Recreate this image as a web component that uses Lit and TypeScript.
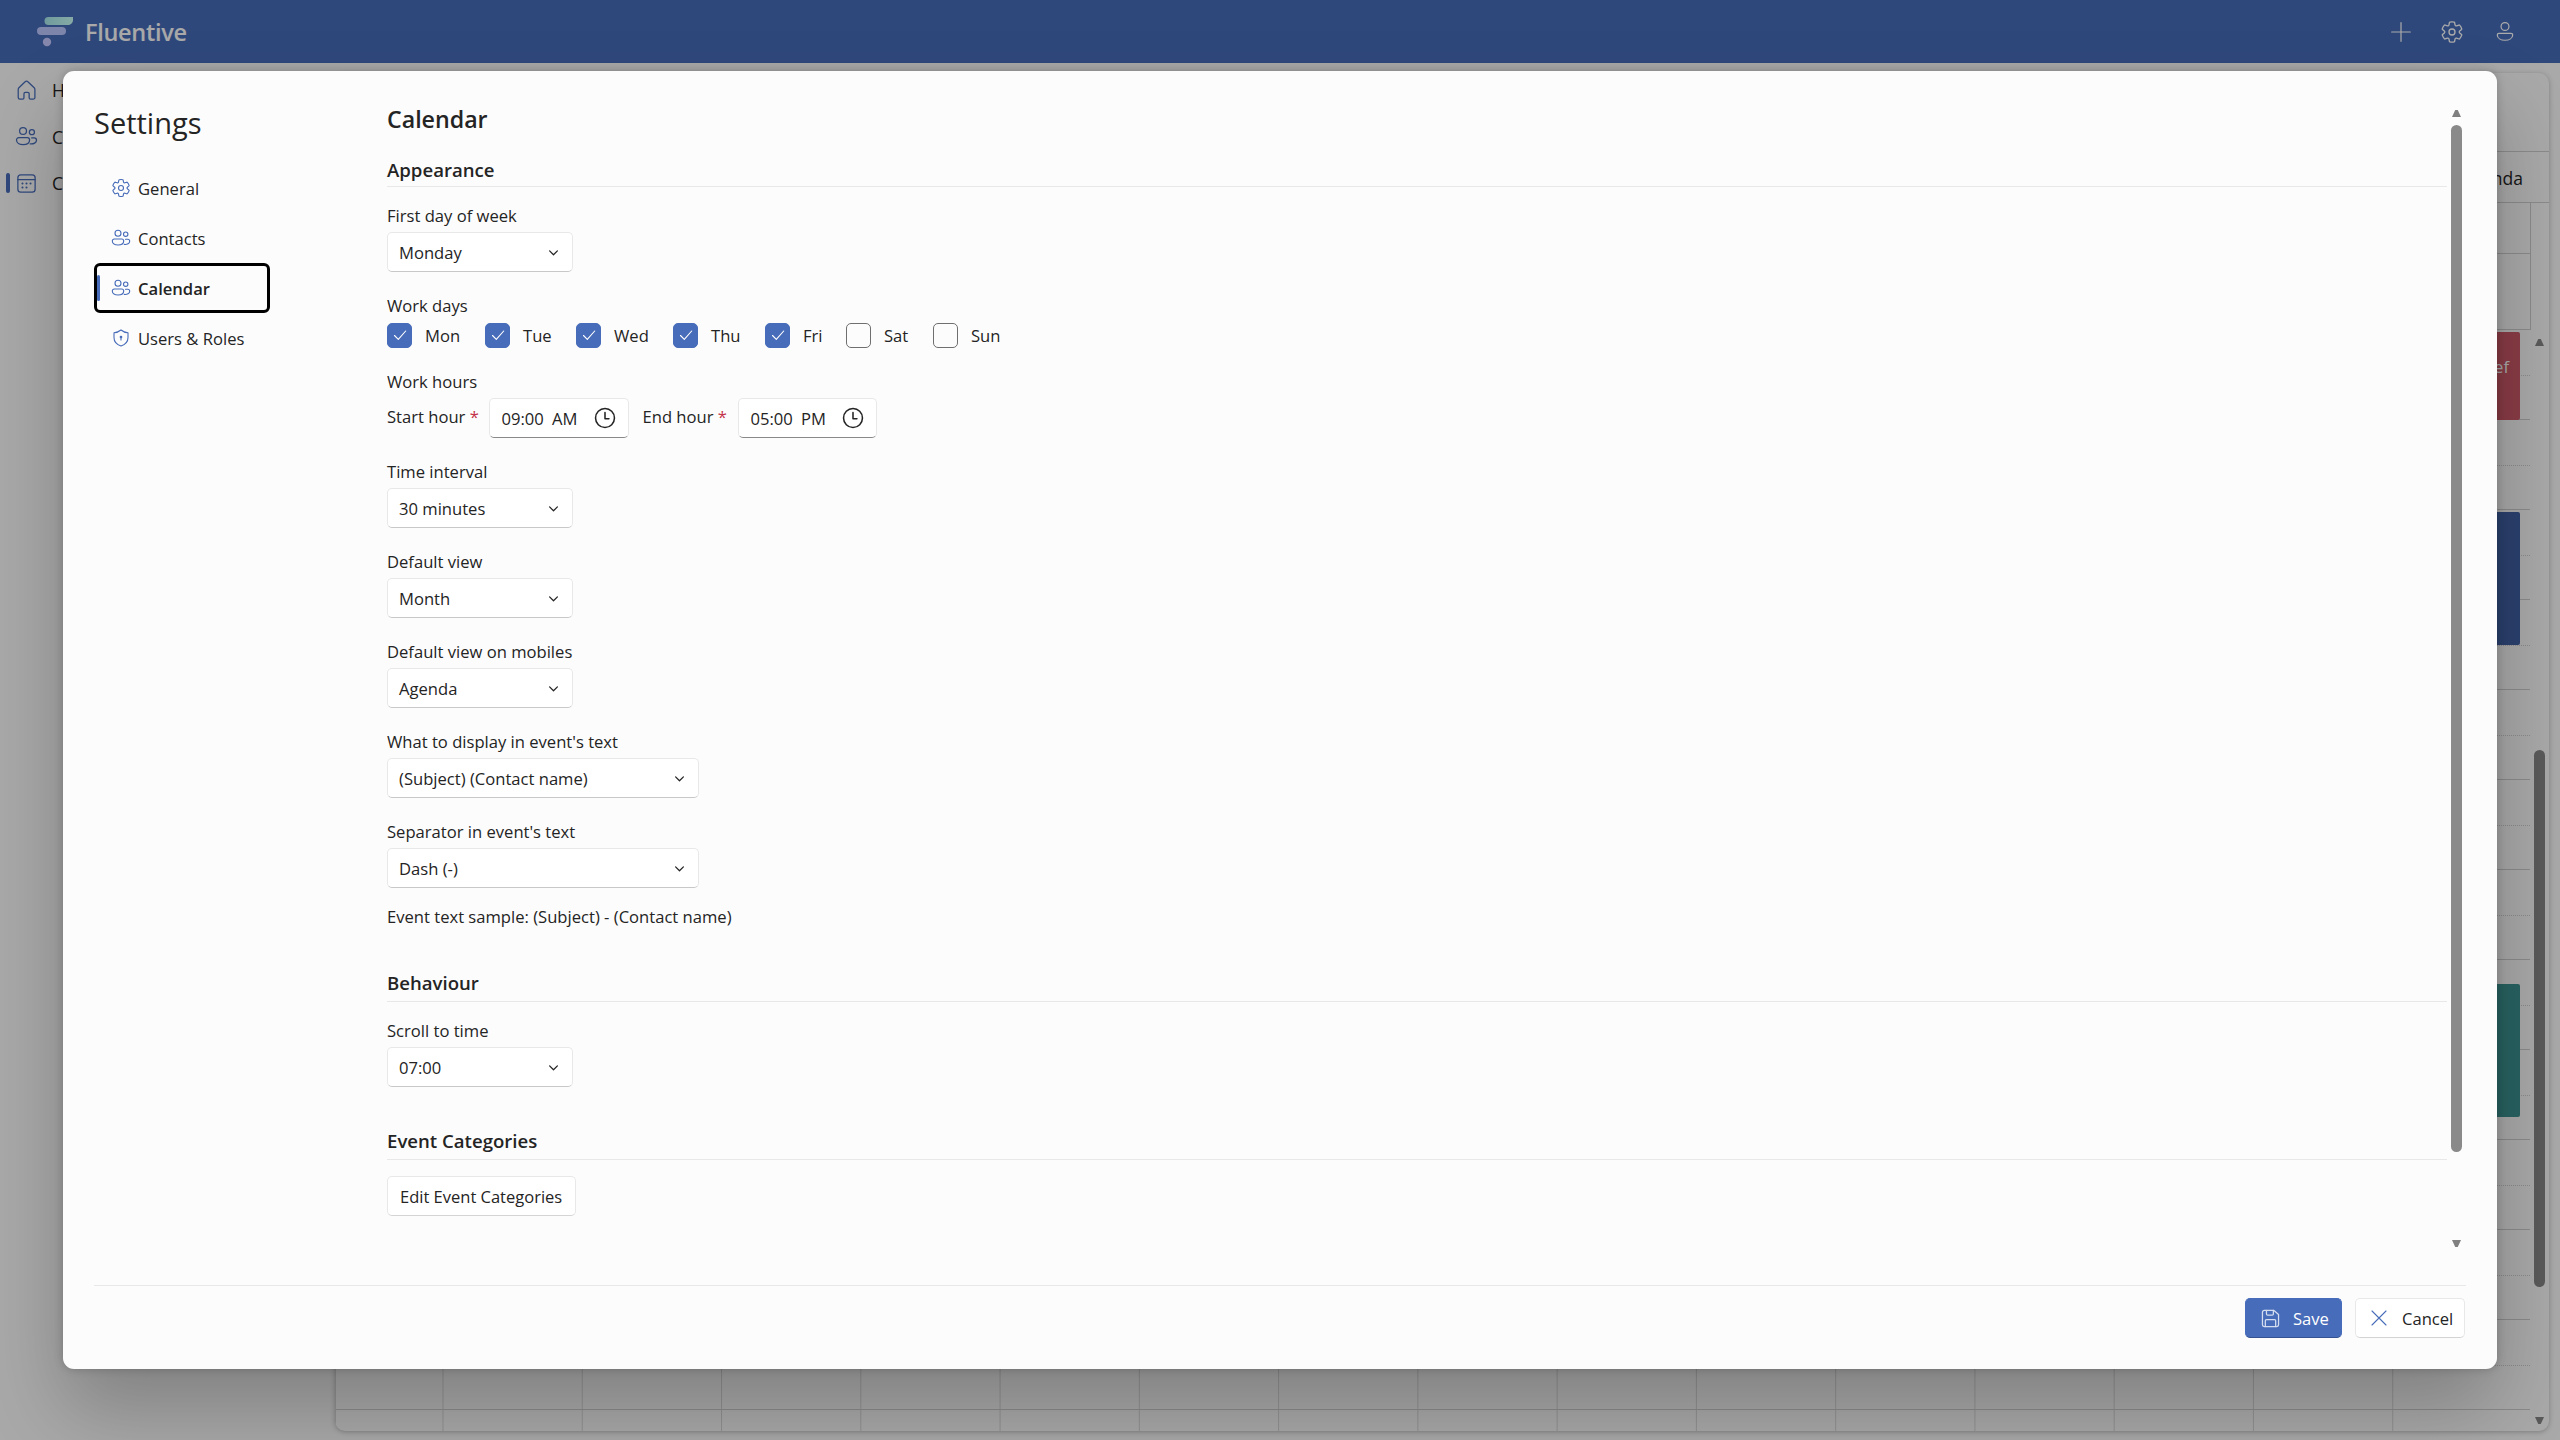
import { LitElement, html, css, svg } from "lit";
import { customElement } from "lit/decorators.js";

const ic = (body: unknown, size = 20, cls = "") =>
  html`<svg class="ic ${cls}" width=${size} height=${size} viewBox="0 0 20 20" fill="none" stroke="currentColor" stroke-width="1.1" stroke-linecap="round" stroke-linejoin="round">${body}</svg>`;

const gear = svg`<path d="M1.91 7.38A8.5 8.5 0 0 1 3.7 4.3a.5.5 0 0 1 .54-.13l1.92.68a1 1 0 0 0 1.32-.76l.36-2a.5.5 0 0 1 .4-.4 8.53 8.53 0 0 1 3.55 0c.2.04.35.2.38.4l.37 2a1 1 0 0 0 1.32.76l1.92-.68a.5.5 0 0 1 .54.13 8.5 8.5 0 0 1 1.78 3.08c.06.2 0 .4-.15.54l-1.56 1.32a1 1 0 0 0 0 1.52l1.56 1.32a.5.5 0 0 1 .15.54 8.5 8.5 0 0 1-1.78 3.08.5.5 0 0 1-.54.13l-1.92-.68a1 1 0 0 0-1.32.76l-.37 2a.5.5 0 0 1-.38.4 8.53 8.53 0 0 1-3.56 0 .5.5 0 0 1-.39-.4l-.36-2a1 1 0 0 0-1.32-.76l-1.92.68a.5.5 0 0 1-.54-.13 8.5 8.5 0 0 1-1.78-3.08.5.5 0 0 1 .15-.54l1.56-1.32a1 1 0 0 0 0-1.52L2.06 7.92a.5.5 0 0 1-.15-.54Z"/><circle cx="10" cy="10" r="2.5"/>`;
const people = svg`<circle cx="7" cy="5.2" r="3"/><circle cx="14.7" cy="6.2" r="2.2"/><path d="M3.3 11h7.4a2 2 0 0 1 2 2c0 2.6-2.6 4-5.7 4s-5.7-1.4-5.7-4a2 2 0 0 1 2-2Z"/><path d="M13.2 16.4c3 .3 5.5-1 5.5-3.2a2 2 0 0 0-2-2h-2.2"/>`;
const home = svg`<path d="M8.6 2.6a2 2 0 0 1 2.8 0l5.3 5a2 2 0 0 1 .6 1.5V16a1.5 1.5 0 0 1-1.5 1.5h-2.3a1.2 1.2 0 0 1-1.2-1.2v-3.5a1.2 1.2 0 0 0-1.2-1.2H9a1.2 1.2 0 0 0-1.2 1.2v3.5a1.2 1.2 0 0 1-1.2 1.2H4.3A1.5 1.5 0 0 1 2.8 16V9.1a2 2 0 0 1 .6-1.5Z"/>`;
const calendarIc = svg`<rect x="2.5" y="2.5" width="15" height="15" rx="2.5"/><path d="M2.5 6.7h15"/><g fill="currentColor" stroke="none"><circle cx="6.5" cy="10" r=".9"/><circle cx="10" cy="10" r=".9"/><circle cx="13.5" cy="10" r=".9"/><circle cx="6.5" cy="13.5" r=".9"/><circle cx="10" cy="13.5" r=".9"/></g>`;
const shield = svg`<path d="M10 2c2 1.7 4.2 2.6 7 2.8v4.7c0 4.2-2.4 7-7 8.5-4.6-1.5-7-4.3-7-8.5V4.8C5.8 4.6 8 3.7 10 2Z"/><circle cx="10" cy="9" r=".8" fill="currentColor"/><path d="M10 9v3"/>`;
const clock = svg`<circle cx="10" cy="10" r="8.6" stroke-width="1.4"/><path d="M10 5v5.6h3.6" stroke-width="1.4"/>`;
const chevron = svg`<path d="M4 7.5l6 6 6-6" stroke-width="1.9"/>`;
const check = svg`<path d="M4.5 10.5l3.8 3.8 7.4-8.3"/>`;
const floppy = svg`<path d="M3 4.5A1.5 1.5 0 0 1 4.5 3H13l4 3.5v9a1.5 1.5 0 0 1-1.5 1.5h-11A1.5 1.5 0 0 1 3 15.5Z"/><path d="M6.5 3v3a1 1 0 0 0 1 1h4a1 1 0 0 0 1-1V3"/><path d="M5.5 17v-5a1 1 0 0 1 1-1h7a1 1 0 0 1 1 1v5"/>`;
const cross = svg`<path d="M3 3l14 14M17 3L3 17"/>`;
const plus = svg`<path d="M10 1.5v17M1.5 10h17"/>`;
const person = svg`<circle cx="10" cy="5" r="3.6"/><path d="M4.5 11.2h11a1.5 1.5 0 0 1 1.5 1.5c0 3-3.2 4.8-7 4.8s-7-1.8-7-4.8a1.5 1.5 0 0 1 1.5-1.5Z"/>`;

const days: [string, boolean][] = [
  ["Mon", true], ["Tue", true], ["Wed", true], ["Thu", true], ["Fri", true], ["Sat", false], ["Sun", false],
];

@customElement("app-root")
export class AppRoot extends LitElement {
  static styles = css`
    :host {
      display: block;
      position: relative;
      width: 2560px;
      height: 1440px;
      overflow: hidden;
      background: #fcfcfc;
      font-family: "Open Sans", "Noto Sans", sans-serif;
      font-size: 16.6px;
      color: #242424;
    }
    .ic { display: block; flex: none; }
    .shell { display: flex; flex-direction: column; height: 1440px; isolation: isolate; }
    .top {
      height: 63px; flex: none; background: #476cb9; color: #fff;
      display: flex; align-items: center; padding: 0 44px 0 37px;
    }
    .logo { display: block; margin-right: 12px; }
    .brand { font-size: 23.5px; font-weight: 600; color: #fcfcfc; letter-spacing: -0.3px; }
    .tools { margin-left: auto; display: flex; align-items: center; gap: 28px; color: #fff; }
    .tools .ic:last-child { margin-left: 2px; }
    .main { flex: 1; display: flex; min-height: 0; }
    .side { width: 335px; flex: none; padding: 4px 0 0 6px; box-sizing: border-box; }
    .side-item { display: flex; align-items: center; height: 46.5px; color: #476cb9; }
    .mark { width: 4px; height: 20px; border-radius: 2px; margin-right: 5px; }
    .mark.on { background: #476cb9; }
    .side-item span.t { margin-left: 14px; width: 11px; overflow: hidden; white-space: nowrap; color: #242424; font-size: 17.5px; }
    .panel {
      flex: 1; position: relative; margin: 10px 11px 9px 0; border-radius: 10px;
      background: #fcfcfc; overflow: hidden;
      box-shadow: 0 1px 5px rgba(0,0,0,.25);
    }
    .bar-one { height: 79px; box-sizing: border-box; border-bottom: 1px solid #d0d0d0; }
    .bar-two {
      height: 51px; box-sizing: border-box; border-bottom: 1px solid #d0d0d0; padding: 2px 26px 0 0;
      display: flex; align-items: center; justify-content: flex-end; font-size: 17.5px;
    }
    .bar-two span { width: 30px; overflow: hidden; display: flex; justify-content: flex-end; white-space: nowrap; }
    .allday { height: 127px; margin-right: 18px; box-sizing: border-box; border-right: 1px solid #d0d0d0; border-bottom: 1px solid #d0d0d0; }
    .allday div { height: 50px; border-bottom: 1px solid #d0d0d0; }
    .rows {
      margin-right: 19px; position: relative;
      background-image: linear-gradient(to right, #d8d8d8 1px, transparent 1px);
      background-size: 139.27px 100%;
      background-position: 106.5px 0;
      background-repeat: repeat-x;
      border-left: 1px solid #d8d8d8;
    }
    .row {
      height: 90px; box-sizing: border-box; border-bottom: 1px solid #d0d0d0; position: relative;
    }
    .row::after { content: ""; position: absolute; left: 0; right: 0; top: 45px; border-top: 1px dotted #d0d0d0; }
    .time { display: block; width: 106px; text-align: center; padding-top: 15px; line-height: 24px; }
    .event {
      position: absolute; left: 2161px; width: 23px; box-sizing: border-box; color: #fff;
      display: flex; justify-content: flex-end; white-space: nowrap; overflow: hidden;
      padding-right: 11px; border-radius: 0 2px 2px 0;
    }
    .event.red { top: 2px; height: 88px; background: #ce5a69; line-height: 70px; }
    .event.blue { top: 182px; height: 133px; background: #4061a6; }
    .event.teal { top: 654px; height: 133px; background: #3d9492; }
    .outer-bar { position: absolute; right: 4px; top: 266px; width: 11px; display: flex; flex-direction: column; align-items: center; color: #878787; }
    .outer-thumb { width: 11px; height: 537px; margin-top: 404px; border-radius: 6px; background: #878787; }
    .outer-down { margin-top: 130px; }
    .tri-up, .tri-down { display: block; flex: none; width: 9px; height: 7px; background: currentColor; }
    .tri-up { clip-path: polygon(36% 0, 64% 0, 100% 100%, 0 100%); }
    .tri-down { clip-path: polygon(0 0, 100% 0, 64% 100%, 36% 100%); }

    .scrim { position: absolute; inset: 0; background: rgba(0,0,0,.33); }

    .modal {
      position: absolute; left: 63px; top: 71px; width: 2434px; height: 1298px;
      box-sizing: border-box; padding: 31px; background: #fcfcfc; border-radius: 11px;
      display: flex; flex-direction: column;
      box-shadow: 0 40px 80px rgba(0,0,0,.24), 0 0 10px rgba(0,0,0,.2);
    }
    .body { flex: 1; display: flex; min-height: 0; }
    .nav { width: 293px; flex: none; }
    .nav h1 { margin: -1px 0 23px; font-size: 29px; line-height: 44px; font-weight: 400; }
    .nav-item {
      position: relative; width: 176px; height: 40px; display: flex; align-items: center;
      padding-left: 17px; box-sizing: border-box; margin-bottom: 10px; gap: 7px;
    }
    .nav-item .ic { color: #476cb9; }
    .nav-item.on { font-weight: 600; }
    .nav-item.on::before { content: ""; position: absolute; left: 3px; top: 7px; width: 3px; height: 26px; border-radius: 2px; background: #476cb9; }
    .nav-item.on::after { content: ""; position: absolute; inset: -5px 0; border: 3px solid #000; border-radius: 6px; }
    .form { flex: 1; min-width: 0; }
    .title { margin: 0; font-size: 23.2px; line-height: 34px; font-weight: 600; }
    .head { margin: 20px 0 0; font-size: 18.6px; line-height: 27px; font-weight: 600; padding-bottom: 3px; border-bottom: 1px solid #e8e8e8; }
    .head.later { margin-top: 40px; padding-bottom: 5px; }
    .field { margin-top: 22px; }
    .head + .field { margin-top: 17px; }
    .head + .field.tight { margin-top: 16px; }
    .label { line-height: 24px; margin-bottom: 4px; }
    .control {
      display: flex; align-items: center; justify-content: space-between; box-sizing: border-box;
      height: 40px; background: #fff; border: 1px solid #e8e8e8; border-bottom-color: #c8c8c8; border-radius: 5px;
      padding: 0 12px 0 11px;
    }
    .dd { width: 186px; }
    .dd.wide { width: 312px; }
    .days { display: grid; grid-template-columns: 98px 91px 97px 92px 81px 87px auto; height: 26px; align-items: center; margin-top: 4px; }
    .day { display: flex; align-items: center; gap: 13px; }
    .box {
      width: 25px; height: 25px; box-sizing: border-box; border-radius: 5px; border: 1px solid #6f6f6f;
      display: flex; align-items: center; justify-content: center; color: #fff;
    }
    .box.on { background: #476cb9; border-color: #476cb9; }
    .hours { display: flex; align-items: center; height: 40px; }
    .hl { flex: none; line-height: 24px; margin-top: -2px; }
    .hl.a { width: 101.5px; }
    .hl.b { width: 95px; margin-left: 13.5px; }
    .req { color: #c4314b; }
    .tp { border-bottom-color: #8a8a8a; padding-left: 12px; padding-right: 12px; word-spacing: 4px; }
    .tp.a { width: 140.5px; }
    .tp.b { width: 139.5px; }
    .sample { margin-top: 17px; line-height: 24px; }
    .btn {
      display: flex; align-items: center; box-sizing: border-box; height: 40px; border-radius: 5px; white-space: nowrap;
      background: #fff; border: 1px solid #e8e8e8; border-bottom-color: #d4d4d4; padding: 0 13px;
    }
    .edit { width: 189px; font-size: 16.5px; padding-left: 12px; }
    .sb { width: 11px; margin: 0 4px; flex: none; display: flex; flex-direction: column; align-items: center; color: #808080; padding-top: 8px; }
    .sb-thumb { width: 11px; height: 1027px; margin-top: 8px; border-radius: 6px; background: #8a8a8a; }
    .sb .tri-down { margin-top: 88px; }
    .foot { flex: none; border-top: 1px solid #e8e8e8; padding: 12px 1px 0 0; display: flex; justify-content: flex-end; gap: 13px; }
    .save { width: 97px; background: #476cb9; border-color: #476cb9; border-bottom-color: #34528f; color: #fff; padding-left: 13px; gap: 11px; }
    .save .ic { color: #d5def0; }
    .cancel { width: 110px; padding-left: 13px; gap: 13px; }
    .cancel .ic { color: #476cb9; }
  `;

  private select(text: string, wide = false) {
    return html`<div class="control dd ${wide ? "wide" : ""}"><span>${text}</span>${ic(chevron, 13)}</div>`;
  }

  private fieldSelect(label: string, value: string, wide = false) {
    return html`<div class="field"><div class="label">${label}</div>${this.select(value, wide)}</div>`;
  }

  private backdrop() {
    const rows = Array.from({ length: 13 }, (_, i) => (i === 12 ? "21:00" : ""));
    return html`<div class="shell">
      <header class="top">
        <svg class="logo" width="36" height="30" viewBox="0 0 36 30">
          <defs><linearGradient id="lg" x1="0" x2="1"><stop offset="0" stop-color="#a6e6ea"/><stop offset="1" stop-color="#c8fff8"/></linearGradient></defs>
          <path d="M11.5 0H36v3c0 2.5-2 5-5 5H11.5a4 4 0 0 1 0-8Z" fill="url(#lg)"/>
          <rect x="0" y="10" width="29" height="8" rx="4" fill="#bcc6ff"/>
          <circle cx="10" cy="25" r="4.2" fill="#c6c8ff"/>
        </svg>
        <span class="brand">Fluentive</span>
        <div class="tools">${ic(plus, 22)}${ic(gear, 24)}${ic(person, 22)}</div>
      </header>
      <div class="main">
        <aside class="side">
          <div class="side-item"><i class="mark"></i>${ic(home, 23)}<span class="t">Home</span></div>
          <div class="side-item"><i class="mark"></i>${ic(people, 23)}<span class="t">Contacts</span></div>
          <div class="side-item"><i class="mark on"></i>${ic(calendarIc, 23)}<span class="t">Calendar</span></div>
        </aside>
        <section class="panel">
          <div class="bar-one"></div>
          <div class="bar-two"><span>Agenda</span></div>
          <div class="allday"><div></div></div>
          <div class="rows">
            ${rows.map((t) => html`<div class="row"><span class="time">${t}</span></div>`)}
            <div class="event red"><span>Brief</span></div>
            <div class="event blue"></div>
            <div class="event teal"></div>
          </div>
          <div class="outer-bar"><i class="tri-up"></i><i class="outer-thumb"></i><i class="tri-down outer-down"></i></div>
        </section>
      </div>
    </div>`;
  }

  render() {
    return html`
      ${this.backdrop()}
      <div class="scrim"></div>
      <div class="modal">
        <div class="body">
          <nav class="nav">
            <h1>Settings</h1>
            <div class="nav-item">${ic(gear)}General</div>
            <div class="nav-item">${ic(people)}Contacts</div>
            <div class="nav-item on">${ic(people)}Calendar</div>
            <div class="nav-item">${ic(shield)}Users &amp; Roles</div>
          </nav>
          <div class="form">
            <h2 class="title">Calendar</h2>
            <h3 class="head">Appearance</h3>
            ${this.fieldSelect("First day of week", "Monday")}
            <div class="field">
              <div class="label">Work days</div>
              <div class="days">
                ${days.map(([d, on]) => html`<label class="day"><span class="box ${on ? "on" : ""}">${on ? ic(check, 20) : ""}</span>${d}</label>`)}
              </div>
            </div>
            <div class="field">
              <div class="label">Work hours</div>
              <div class="hours">
                <span class="hl a">Start hour <span class="req">*</span></span>
                <div class="control tp a"><span>09:00 AM</span>${ic(clock, 22)}</div>
                <span class="hl b">End hour <span class="req">*</span></span>
                <div class="control tp b"><span>05:00 PM</span>${ic(clock, 22)}</div>
              </div>
            </div>
            ${this.fieldSelect("Time interval", "30 minutes")}
            ${this.fieldSelect("Default view", "Month")}
            ${this.fieldSelect("Default view on mobiles", "Agenda")}
            ${this.fieldSelect("What to display in event's text", "(Subject) (Contact name)", true)}
            ${this.fieldSelect("Separator in event's text", "Dash (-)", true)}
            <div class="sample">Event text sample: (Subject) - (Contact name)</div>
            <h3 class="head later">Behaviour</h3>
            ${this.fieldSelect("Scroll to time", "07:00")}
            <h3 class="head later">Event Categories</h3>
            <div class="field tight"><div class="btn edit">Edit Event Categories</div></div>
          </div>
          <div class="sb"><i class="tri-up"></i><i class="sb-thumb"></i><i class="tri-down"></i></div>
        </div>
        <div class="foot">
          <div class="btn save">${ic(floppy, 23)}Save</div>
          <div class="btn cancel">${ic(cross, 20)}Cancel</div>
        </div>
      </div>
    `;
  }
}
